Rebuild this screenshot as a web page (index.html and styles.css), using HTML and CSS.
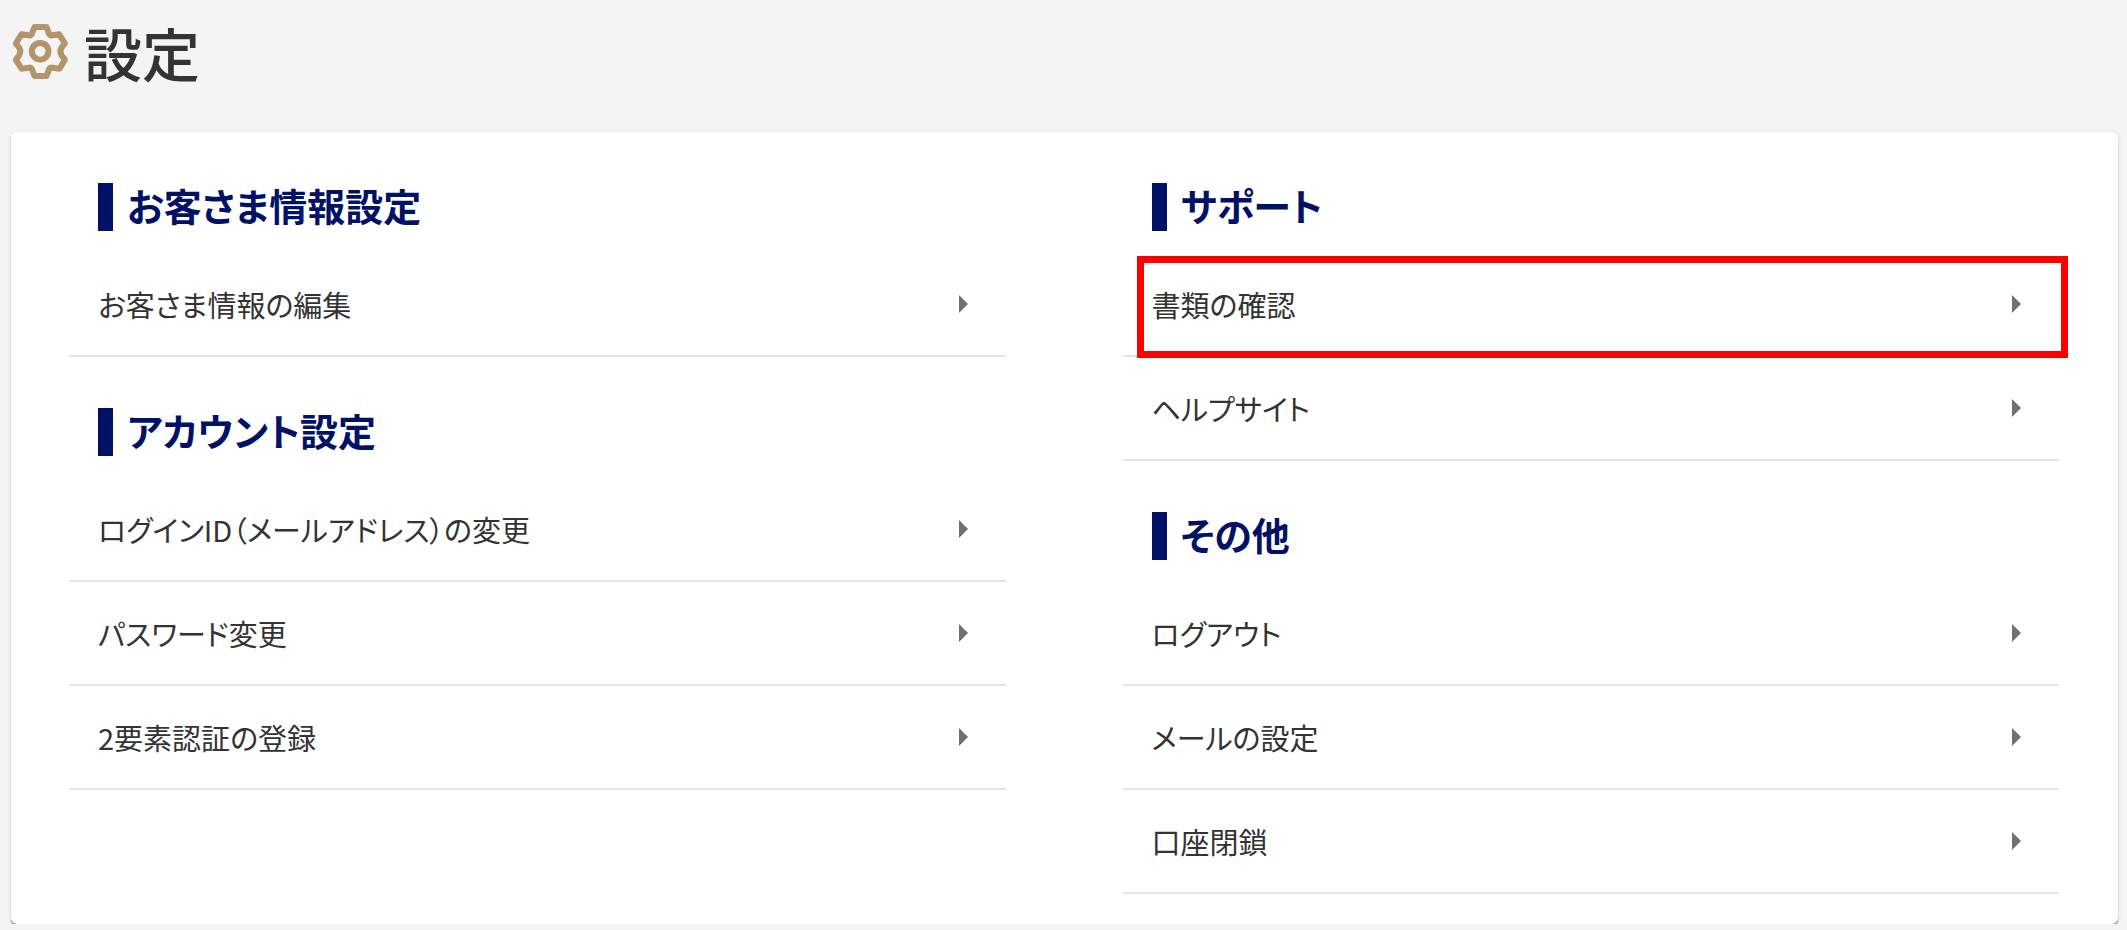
FILE: index.html
```html
<!DOCTYPE html>
<html lang="ja">
<head>
<meta charset="utf-8">
<meta name="viewport" content="width=device-width, initial-scale=1">
<title>設定</title>
<link rel="stylesheet" href="styles.css">
</head>
<body>
<header class="page-header">
  <svg class="gear" viewBox="36 68 170 171" aria-hidden="true">
    <path d="M103 80H139L146 99Q149 106 157 105L177 102L194 129L184 142Q177 153 184 165L194 178L178 205L157 202Q149 201 146 208L139 227H103L96 208Q93 201 85 202L64 205L47 178L57 165Q64 153 57 142L47 129L64 102L85 105Q93 106 96 99Z"/>
    <circle cx="120" cy="153" r="25"/>
  </svg>
  <h1 class="page-title">設定</h1>
</header>
<main class="card">
  <div class="column">
    <section>
      <h2 class="section-title">お客さま情報設定</h2>
      <ul class="menu">
        <li><a class="menu-link" href="#">お客さま情報の編集</a></li>
      </ul>
    </section>
    <section>
      <h2 class="section-title">アカウント設定</h2>
      <ul class="menu">
        <li><a class="menu-link" href="#">ログインID（メールアドレス）の変更</a></li>
        <li><a class="menu-link" href="#">パスワード変更</a></li>
        <li><a class="menu-link" href="#">2要素認証の登録</a></li>
      </ul>
    </section>
  </div>
  <div class="column">
    <section>
      <h2 class="section-title">サポート</h2>
      <ul class="menu">
        <li><a class="menu-link menu-link-marked" href="#">書類の確認</a></li>
        <li><a class="menu-link" href="#">ヘルプサイト</a></li>
      </ul>
    </section>
    <section>
      <h2 class="section-title">その他</h2>
      <ul class="menu">
        <li><a class="menu-link" href="#">ログアウト</a></li>
        <li><a class="menu-link" href="#">メールの設定</a></li>
        <li><a class="menu-link" href="#">口座閉鎖</a></li>
      </ul>
    </section>
  </div>
</main>
</body>
</html>
```
FILE: styles.css
```css
* {
  box-sizing: border-box;
}

body {
  margin: 0;
  background: #f4f4f4;
  color: #333;
  font-family: "Noto Sans CJK JP", sans-serif;
  font-feature-settings: "palt";
}

.page-header {
  display: flex;
  align-items: center;
  gap: 15px;
  padding: 12px 12px 40px;
}

.gear {
  width: 57px;
  height: 57px;
  margin-bottom: 2px;
  fill: none;
  stroke: #b2956a;
  stroke-width: 18;
  stroke-linejoin: round;
}

.page-title {
  margin: 0;
  font-size: 58px;
  font-weight: 500;
  line-height: 80px;
}

.card {
  display: grid;
  grid-template-columns: 1fr 1fr;
  margin: 0 9px 0 11px;
  padding-bottom: 30px;
  border-radius: 6px;
  background: #fff;
  box-shadow: 0 2px 1px rgba(0, 0, 0, 0.42), 0 1px 4px rgba(0, 0, 0, 0.12);
}

.column {
  padding: 0 59px 0 58px;
}

.section-title {
  display: flex;
  align-items: flex-start;
  gap: 14px;
  margin: 0;
  padding: 51px 29px 22px;
  color: #001166;
  font-size: 38px;
  font-weight: 700;
  line-height: 44px;
}

.section-title::before {
  content: "";
  width: 15px;
  height: 48px;
  background: #001166;
}

.menu {
  margin: 0;
  padding: 0;
  list-style: none;
}

.menu-link {
  position: relative;
  display: flex;
  align-items: center;
  justify-content: space-between;
  padding: 30px 38px 30px 29px;
  border-bottom: 2px solid #e3e3e3;
  color: inherit;
  font-size: 29px;
  line-height: 42px;
  text-decoration: none;
}

.menu-link::after {
  content: "";
  border-top: 9px solid transparent;
  border-bottom: 9px solid transparent;
  border-left: 9px solid #707070;
}

/* Highlight frame drawn over the row */
.menu-link-marked::before {
  content: "";
  position: absolute;
  inset: 3px -9px -3px 14px;
  border: 7px solid #f00;
}
```
